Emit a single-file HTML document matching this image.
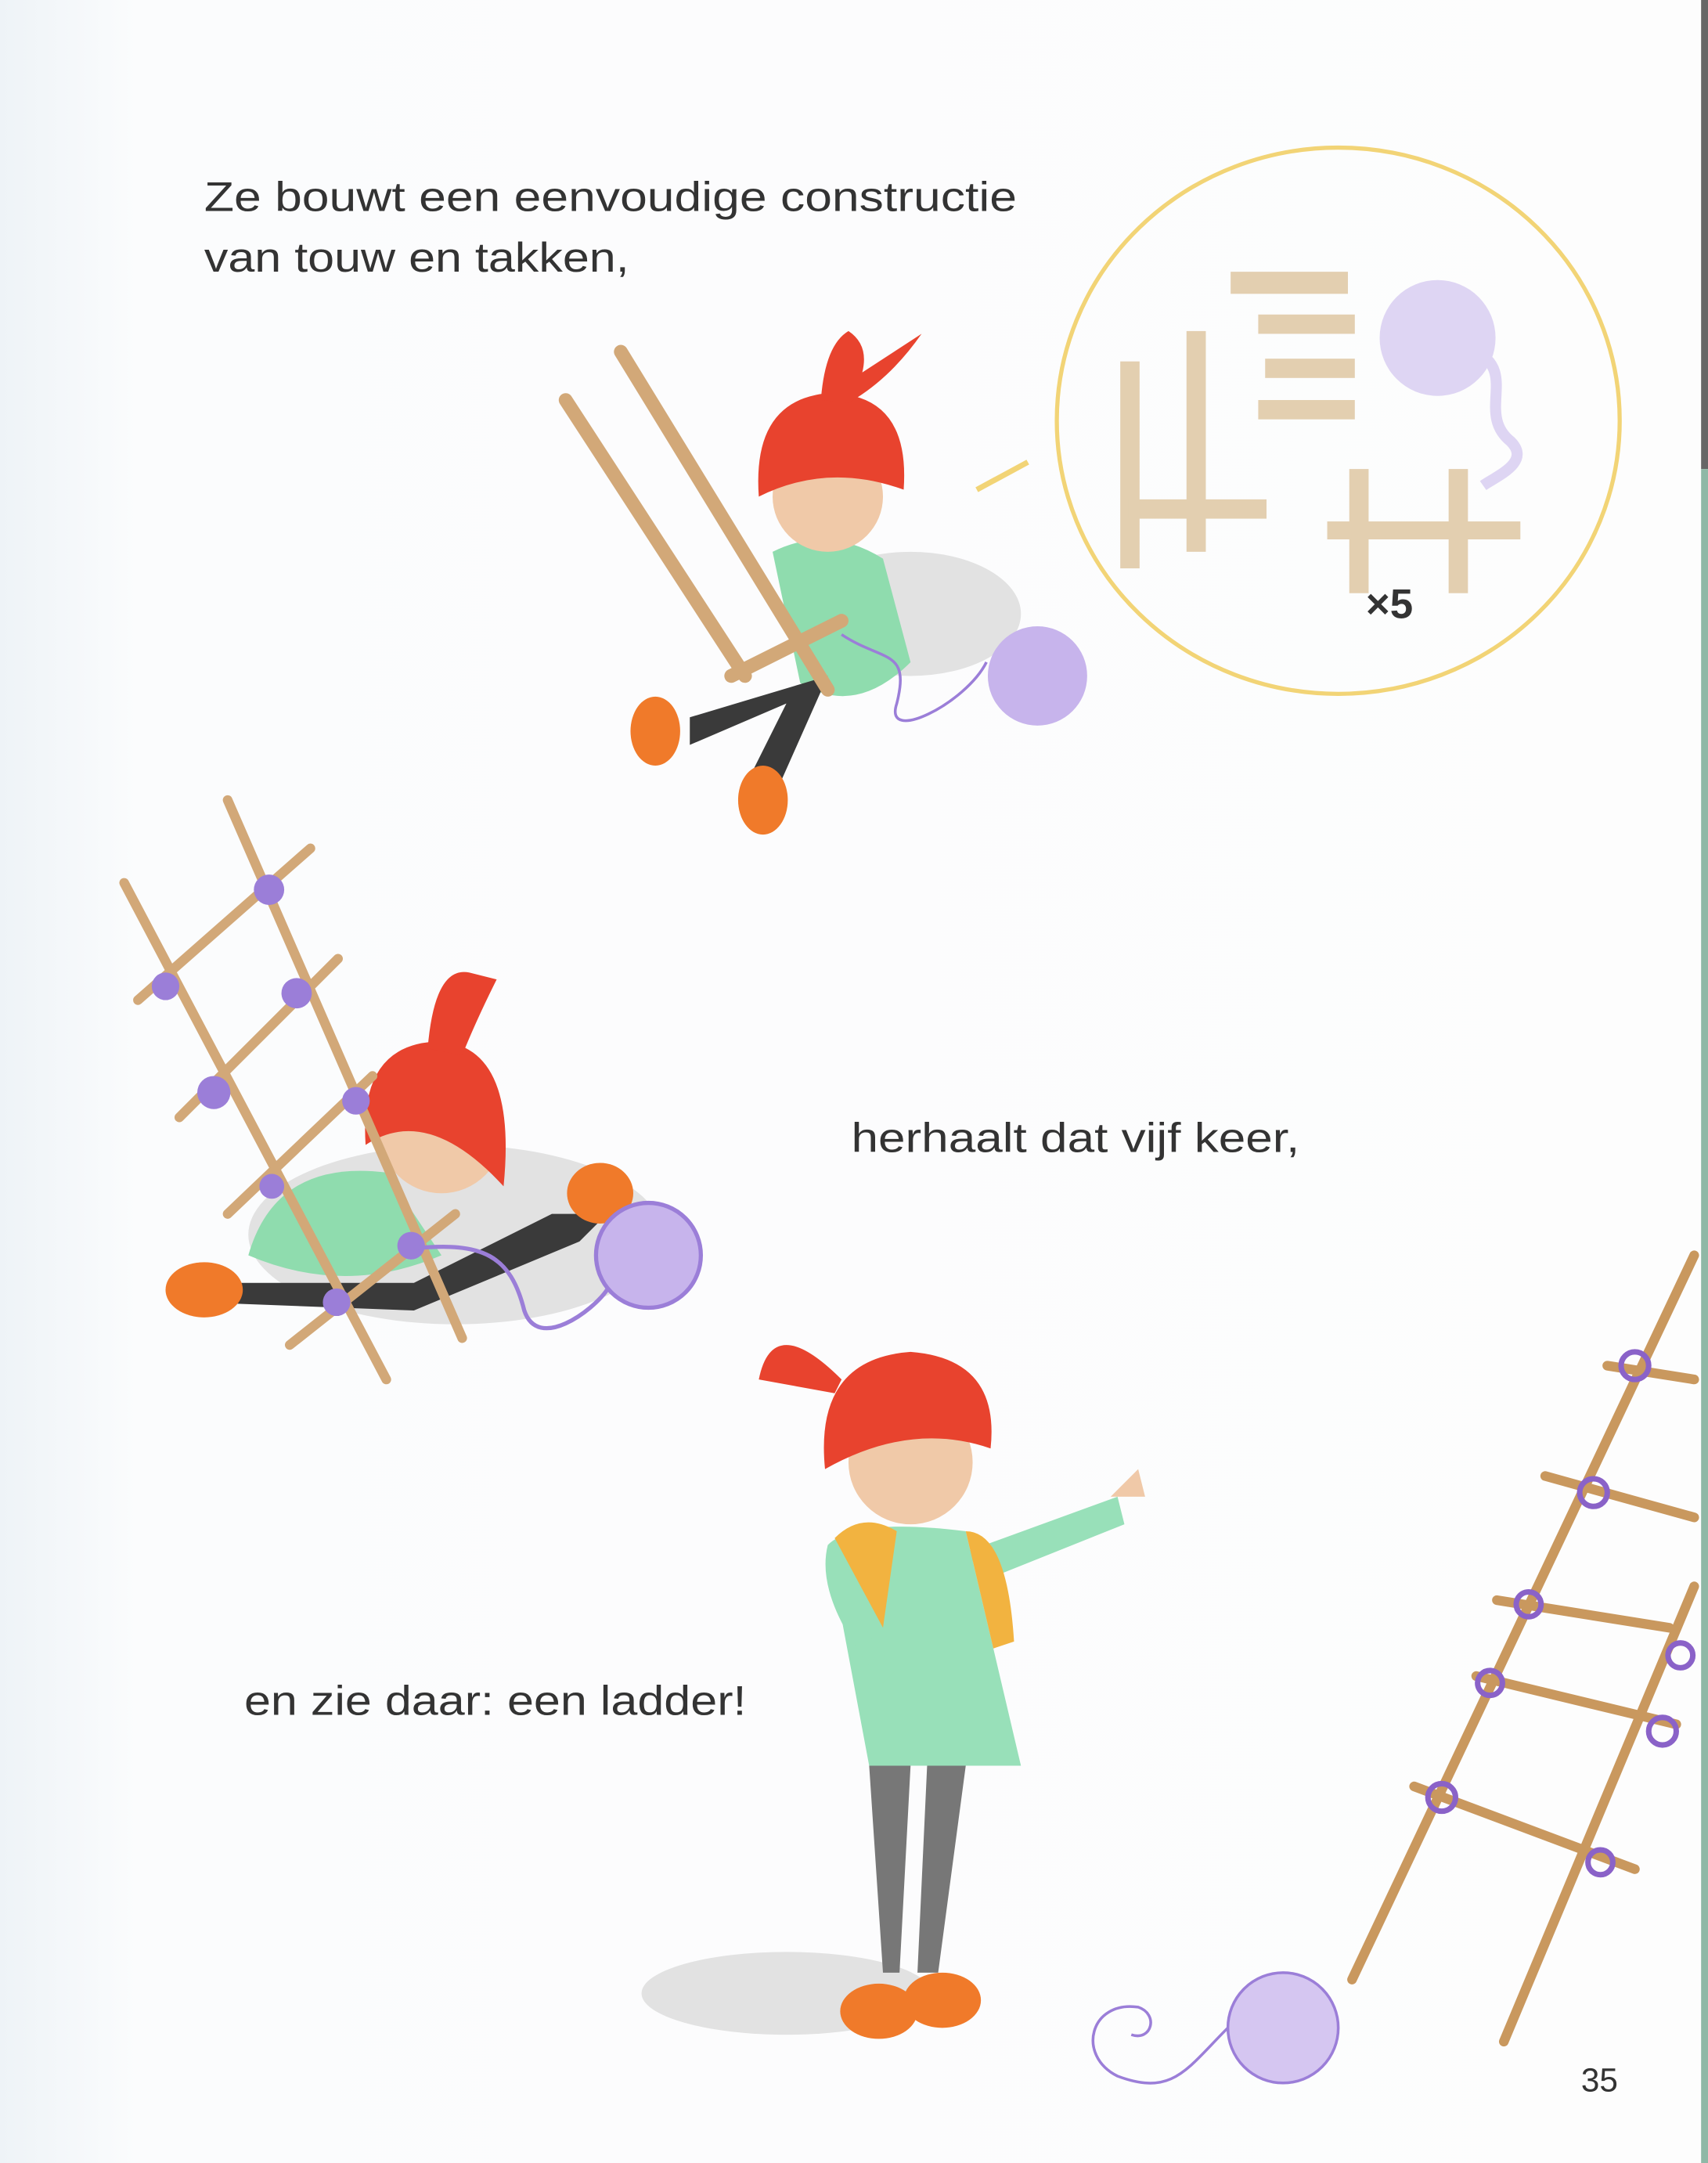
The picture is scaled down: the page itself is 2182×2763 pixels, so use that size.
<!DOCTYPE html>
<html><head><meta charset="utf-8"><style>
html,body{margin:0;padding:0;background:#fdfdfd}
svg{display:block}
text{font-family:"Liberation Sans",sans-serif;fill:#333}
</style></head><body>
<svg width="2182" height="2763" viewBox="0 0 1238 1568" preserveAspectRatio="none">
<defs><linearGradient id="bg" x1="0" x2="1"><stop offset="0" stop-color="#eef3f7"/><stop offset="0.08" stop-color="#fbfcfd"/><stop offset="1" stop-color="#fdfdfd"/></linearGradient></defs>
<rect width="1238" height="1568" fill="url(#bg)"/>
<rect x="1233" y="0" width="5" height="340" fill="#666"/>
<rect x="1233" y="340" width="5" height="1228" fill="#8fb8a6"/>

<text x="148" y="153" font-size="30" textLength="589" lengthAdjust="spacingAndGlyphs">Ze bouwt een eenvoudige constructie</text>
<text x="148" y="197" font-size="30" textLength="308" lengthAdjust="spacingAndGlyphs">van touw en takken,</text>
<text x="617" y="835" font-size="30" textLength="325" lengthAdjust="spacingAndGlyphs">herhaalt dat vijf keer,</text>
<text x="177" y="1243" font-size="30" textLength="364" lengthAdjust="spacingAndGlyphs">en zie daar: een ladder!</text>
<text x="1146" y="1516" font-size="24" fill="#555">35</text>

<!-- thought bubble -->
<ellipse cx="970" cy="305" rx="204" ry="198" fill="none" stroke="#f2d476" stroke-width="3"/>
<path d="M708 355 L745 335" stroke="#f2d476" stroke-width="4"/>
<g fill="#e3cfb0">
<rect x="812" y="262" width="14" height="150"/><rect x="860" y="240" width="14" height="160"/>
<rect x="818" y="362" width="100" height="14"/>
<rect x="892" y="197" width="85" height="16"/><rect x="912" y="228" width="70" height="14"/>
<rect x="917" y="260" width="65" height="14"/><rect x="912" y="290" width="70" height="14"/>
<rect x="978" y="340" width="14" height="90"/><rect x="1050" y="340" width="14" height="90"/>
<rect x="962" y="378" width="140" height="13"/>
</g>
<circle cx="1042" cy="245" r="42" fill="#ded5f3"/>
<path d="M1070 255 C1100 270 1070 300 1095 320 C1110 335 1085 345 1075 352" stroke="#ded5f3" stroke-width="8" fill="none"/>
<text x="990" y="448" font-size="30" font-weight="bold" fill="#8a70c8">×5</text>

<!-- girl 1 -->
<ellipse cx="660" cy="445" rx="80" ry="45" fill="#e2e2e2"/>
<path d="M560 400 Q600 380 640 405 L660 480 Q620 520 580 495 Z" fill="#8fdcae"/>
<path d="M500 520 L600 490 L560 580 L540 570 L570 510 L500 540Z" fill="#3a3a3a"/>
<ellipse cx="475" cy="530" rx="18" ry="25" fill="#f07a2a"/>
<ellipse cx="553" cy="580" rx="18" ry="25" fill="#f07a2a"/>
<ellipse cx="600" cy="360" rx="40" ry="40" fill="#f0c9a8"/>
<path d="M550 360 Q545 290 600 285 Q660 285 655 355 Q600 335 550 360Z" fill="#e8432e"/>
<path d="M595 290 Q598 250 615 240 Q630 250 625 270 L668 242 Q645 275 615 292Z" fill="#e8432e"/>
<path d="M410 290 L540 490 M450 255 L600 500 M530 490 L610 450" stroke="#d2a878" stroke-width="10" stroke-linecap="round"/>
<circle cx="752" cy="490" r="36" fill="#c7b4ec"/>
<path d="M610 460 C640 480 660 470 650 510 C640 540 700 510 715 480" stroke="#9b7ed8" stroke-width="2" fill="none"/>

<!-- girl 2 with ladder -->
<ellipse cx="330" cy="895" rx="150" ry="65" fill="#e2e2e2"/>
<path d="M180 910 Q200 840 280 850 L320 910 Q250 940 180 910Z" fill="#8fdcae"/>
<path d="M170 930 L300 930 L400 880 L440 880 L420 900 L300 950 L170 945Z" fill="#3a3a3a"/>
<ellipse cx="148" cy="935" rx="28" ry="20" fill="#f07a2a"/>
<ellipse cx="435" cy="865" rx="24" ry="22" fill="#f07a2a"/>
<ellipse cx="320" cy="820" rx="45" ry="45" fill="#f0c9a8"/>
<path d="M265 830 Q260 755 320 755 Q375 760 365 860 Q310 800 265 830Z" fill="#e8432e"/>
<path d="M310 760 Q315 700 340 705 L360 710 Q345 740 335 765Z" fill="#e8432e"/>
<g stroke="#d2a878" stroke-width="7" stroke-linecap="round">
<path d="M90 640 L280 1000 M165 580 L335 970 M100 725 L225 615 M130 810 L245 695 M165 880 L270 780 M210 975 L330 880"/></g>
<g fill="#9b7ed8"><circle cx="195" cy="645" r="11"/><circle cx="120" cy="715" r="10"/><circle cx="215" cy="720" r="11"/><circle cx="155" cy="792" r="12"/><circle cx="258" cy="798" r="10"/><circle cx="197" cy="860" r="9"/><circle cx="298" cy="903" r="10"/><circle cx="244" cy="944" r="10"/></g>
<circle cx="470" cy="910" r="38" fill="#c7b4ec" stroke="#9b7ed8" stroke-width="3"/>
<path d="M300 905 C350 900 370 910 380 950 C390 980 430 950 440 935" stroke="#9b7ed8" stroke-width="3" fill="none"/>

<!-- standing girl -->
<ellipse cx="570" cy="1445" rx="105" ry="30" fill="#e2e2e2"/>
<path d="M630 1280 L640 1430 L652 1430 L660 1280Z M672 1280 L665 1430 L680 1430 L700 1280Z" fill="#777"/>
<ellipse cx="637" cy="1458" rx="28" ry="20" fill="#f07a2a"/>
<ellipse cx="683" cy="1450" rx="28" ry="20" fill="#f07a2a"/>
<path d="M600 1120 Q620 1100 700 1110 L740 1280 L630 1280 Z" fill="#98e0b9"/>
<path d="M700 1125 L810 1085 L815 1105 L715 1145Z" fill="#98e0b9"/>
<path d="M600 1120 Q590 1160 640 1220 L650 1210 Q610 1170 620 1130Z" fill="#98e0b9"/>
<path d="M605 1115 Q625 1095 650 1110 L640 1180 Z M700 1110 Q730 1110 735 1190 L720 1195Z" fill="#f2b340"/>
<ellipse cx="660" cy="1060" rx="45" ry="45" fill="#f0c9a8"/>
<path d="M598 1065 Q590 985 660 980 Q725 985 718 1050 Q660 1030 598 1065Z" fill="#e8432e"/>
<path d="M610 1000 Q560 950 550 1000 L605 1010Z" fill="#e8432e"/>
<path d="M805 1085 L825 1065 L830 1085 Z" fill="#f0c9a8"/>

<!-- ladder right -->
<g stroke="#c9985e" stroke-width="7" stroke-linecap="round">
<path d="M980 1435 L1228 910 M1090 1480 L1228 1150"/>
<path d="M1165 990 L1228 1000 M1120 1070 L1228 1100 M1085 1160 L1210 1180 M1070 1215 L1215 1250 M1025 1295 L1185 1355"/></g>
<g fill="none" stroke="#8a62c8" stroke-width="4"><circle cx="1185" cy="990" r="10"/><circle cx="1155" cy="1082" r="10"/><circle cx="1108" cy="1163" r="9"/><circle cx="1080" cy="1220" r="9"/><circle cx="1218" cy="1200" r="9"/><circle cx="1205" cy="1255" r="10"/><circle cx="1045" cy="1303" r="10"/><circle cx="1160" cy="1350" r="9"/></g>
<circle cx="930" cy="1470" r="40" fill="#d5c6f1" stroke="#9b7ed8" stroke-width="2"/>
<path d="M890 1470 C860 1500 850 1520 810 1505 C780 1490 790 1450 825 1455 C840 1460 835 1480 820 1475" stroke="#9b7ed8" stroke-width="2" fill="none"/>
</svg>
</body></html>
